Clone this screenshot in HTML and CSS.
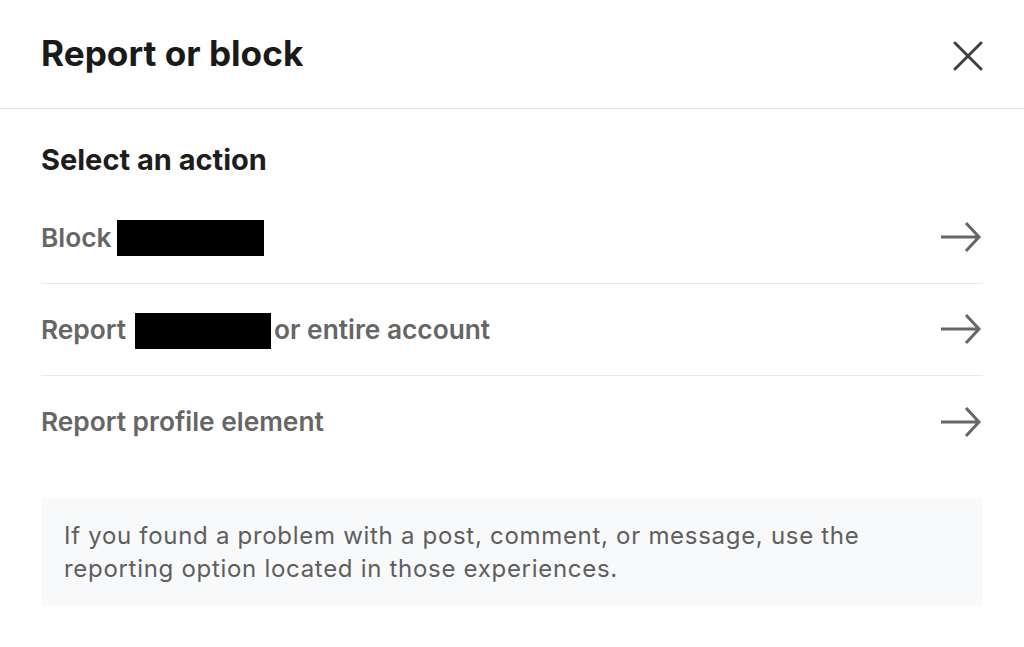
FILE: index.html
```html
<!DOCTYPE html>
<html lang="en">
<head>
<meta charset="utf-8">
<title>Report or block</title>
<link rel="stylesheet" href="styles.css">
</head>
<body>
<div class="modal">
  <header class="modal-header">
    <h1 class="modal-title">Report or block</h1>
    <button class="close-btn" aria-label="Dismiss">
      <svg viewBox="0 0 30 30" width="30" height="30"><path d="M2 2 L28 28 M28 2 L2 28" fill="none" stroke="#404040" stroke-width="3" stroke-linecap="round"/></svg>
    </button>
  </header>
  <div class="modal-body">
    <h2 class="section-title">Select an action</h2>
    <ul class="actions">
      <li class="action">
        <span class="action-label">Block <span class="redact redact-a"></span></span>
        <svg class="arrow" viewBox="0 0 42 32" width="42" height="32"><path d="M1 16 H39 M26 2 L39 16 L26 30" fill="none" stroke="#666" stroke-width="3"/></svg>
      </li>
      <li class="action">
        <span class="action-label">Report <span class="redact redact-b"></span>or entire account</span>
        <svg class="arrow" viewBox="0 0 42 32" width="42" height="32"><path d="M1 16 H39 M26 2 L39 16 L26 30" fill="none" stroke="#666" stroke-width="3"/></svg>
      </li>
      <li class="action">
        <span class="action-label">Report profile element</span>
        <svg class="arrow" viewBox="0 0 42 32" width="42" height="32"><path d="M1 16 H39 M26 2 L39 16 L26 30" fill="none" stroke="#666" stroke-width="3"/></svg>
      </li>
    </ul>
    <div class="info">
      If you found a problem with a post, comment, or message, use the<br>reporting option located in those experiences.
    </div>
  </div>
</div>
</body>
</html>
```
FILE: styles.css
```css
* { box-sizing: border-box; }
html, body { margin: 0; padding: 0; background: #fff; }
body {
  font-family: Inter, "Open Sans", "Liberation Sans", sans-serif;
  color: #1d1d1d;
  width: 1024px;
  height: 647px;
  overflow: hidden;
}
.modal { width: 1024px; }
.modal-header {
  height: 109px;
  border-bottom: 1px solid #e3e3e3;
  display: flex;
  align-items: center;
  justify-content: space-between;
  padding: 0 41px 2px 41px;
}
.modal-title {
  margin: 0;
  font-size: 35.2px;
  font-weight: 700;
  letter-spacing: 0;
  color: #1a1a1a;
  line-height: 40px;
}
.close-btn {
  border: 0;
  background: none;
  padding: 0;
  width: 30px;
  height: 30px;
  margin-top: 6px;
  margin-right: 0;
  cursor: pointer;
  display: flex;
}
.modal-body {
  padding: 0 41px;
}
.section-title {
  margin: 33px 0 14px;
  font-size: 29px;
  line-height: 36px;
  font-weight: 700;
  letter-spacing: 0;
  color: #1d1d1d;
}
.actions {
  list-style: none;
  margin: 0;
  padding: 0;
}
.action {
  height: 92px;
  display: flex;
  align-items: center;
  justify-content: space-between;
  border-bottom: 1px solid #e6e6e6;
  padding-bottom: 1px;
}
.action:last-child { border-bottom: 0; }
.action-label {
  font-size: 26.3px;
  font-weight: 600;
  color: #666;
  display: flex;
  align-items: center;
  letter-spacing: 0;
}
.redact {
  display: inline-block;
  background: #000;
  height: 36px;
}
.redact-a { width: 147px; margin-left: 5px; margin-top: 2px; }
.redact-b { width: 136px; margin-left: 9px; margin-right: 3px; margin-top: 4px; }
.arrow { margin-right: 1px; }
.info {
  margin-top: 30px;
  background: #f8f9fb;
  border-radius: 4px;
  padding: 21px 23px 22px;
  font-size: 24px;
  line-height: 33px;
  letter-spacing: 0.7px;
  color: #5e5e5e;
  height: 108px;
}
```
